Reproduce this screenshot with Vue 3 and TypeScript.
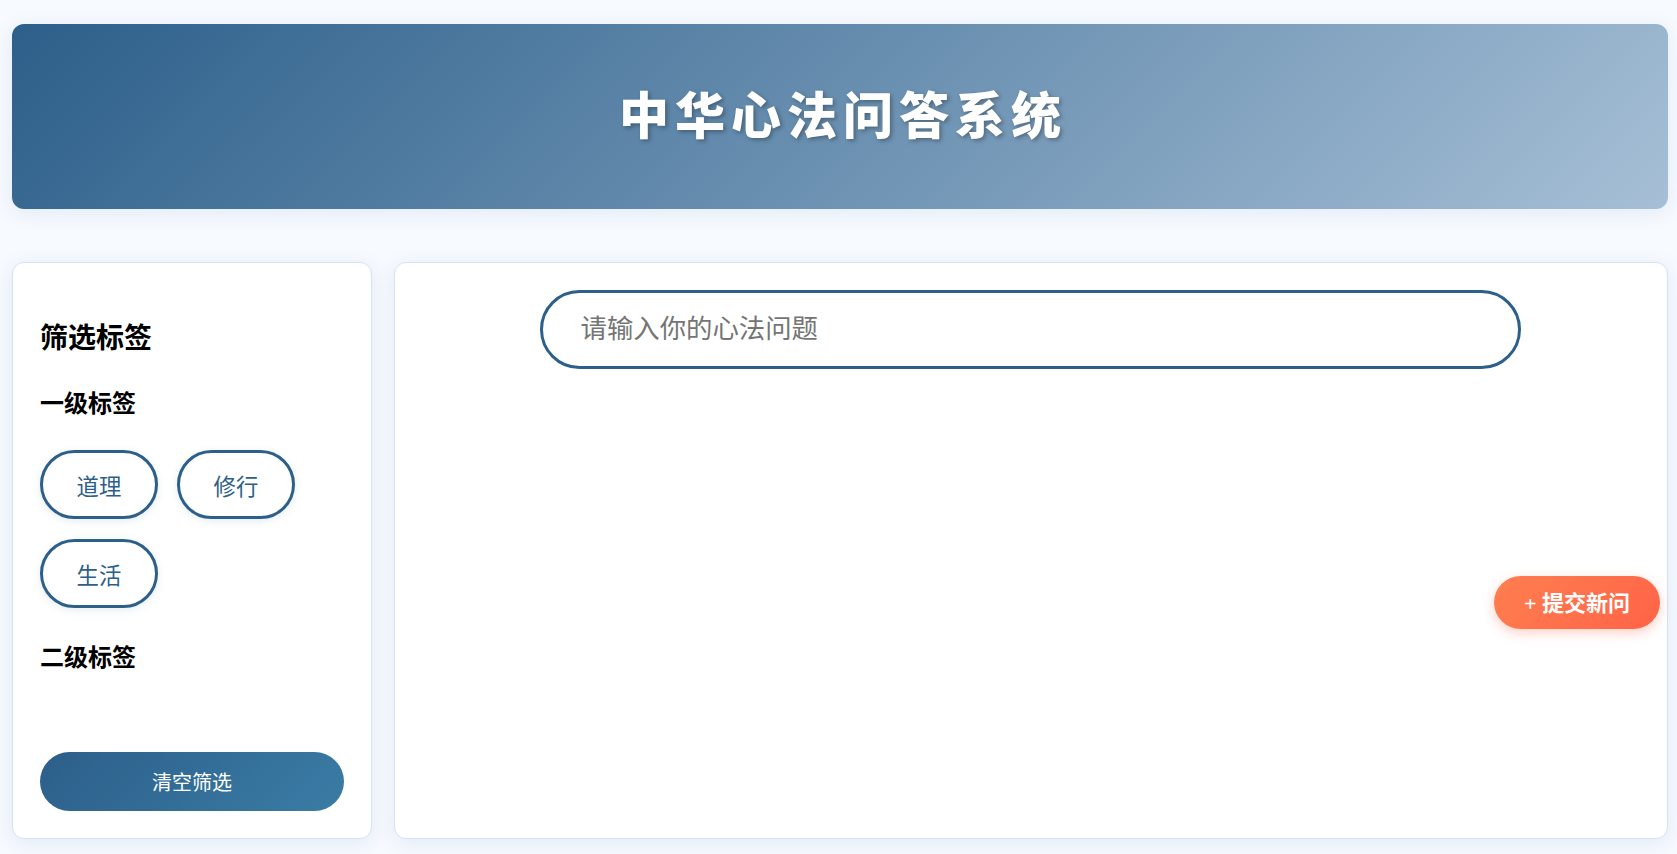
<script setup lang="ts">
const primaryTags: string[] = ['道理', '修行', '生活']
</script>

<template>
  <div class="page">
    <header class="banner">
      <h1 class="title">中华心法问答系统</h1>
    </header>
    <div class="content">
      <aside class="sidebar">
        <h2 class="side-title">筛选标签</h2>
        <h3 class="group-title first">一级标签</h3>
        <div class="tags">
          <button v-for="t in primaryTags" :key="t" class="tag">{{ t }}</button>
        </div>
        <h3 class="group-title second">二级标签</h3>
        <button class="clear">清空筛选</button>
      </aside>
      <main class="main">
        <input class="search" type="text" placeholder="请输入你的心法问题" />
      </main>
    </div>
    <button class="submit">+ 提交新问</button>
  </div>
</template>

<style>
html, body { margin: 0; background: #f7faff; }
</style>

<style scoped>
.page {
  box-sizing: border-box;
  height: 854px;
  padding: 24px 9px 15px 12px;
  display: flex;
  flex-direction: column;
  background: #f7faff;
  font-family: "Liberation Serif", "Noto Sans CJK SC", serif;
  position: relative;
  overflow: hidden;
}
.banner {
  height: 185px;
  flex: none;
  padding-bottom: 10px;
  box-sizing: border-box;
  border-radius: 12px;
  background: linear-gradient(135deg, #2c5f8a, #a6bfd6);
  box-shadow: 0 4px 20px rgba(44, 95, 138, 0.1);
  display: flex;
  align-items: center;
  justify-content: center;
}
.title {
  margin: 0;
  padding-left: 6px;
  color: #fff;
  font-family: "Noto Sans CJK SC", sans-serif;
  font-size: 50px;
  font-weight: 900;
  letter-spacing: 6px;
  text-shadow: 2px 2px 4px rgba(0, 0, 0, 0.3);
}
.content {
  flex: 1;
  min-height: 0;
  margin-top: 53px;
  display: flex;
  gap: 22px;
}
.sidebar {
  box-sizing: border-box;
  width: 360px;
  flex: none;
  padding: 27px;
  background: #fff;
  border: 1px solid #d4e3f8;
  border-radius: 12px;
  box-shadow: 0 4px 20px rgba(44, 95, 138, 0.1);
  display: flex;
  flex-direction: column;
}
.side-title {
  margin: 33px 0 0;
  font-size: 28px;
  line-height: 32px;
  font-weight: 700;
  color: #000;
}
.group-title {
  margin: 0;
  font-size: 24px;
  line-height: 28px;
  font-weight: 700;
  color: #000;
}
.first { margin-top: 35px; }
.second { margin-top: 36px; }
.tags {
  margin-top: 32px;
  display: flex;
  flex-wrap: wrap;
  gap: 20px 19px;
}
.tag {
  box-sizing: border-box;
  width: 118px;
  height: 69px;
  padding: 0;
  background: #fff;
  border: 3px solid #2c5f8a;
  border-radius: 35px;
  color: #2c5f8a;
  font-family: inherit;
  font-size: 22.4px;
  box-shadow: 0 2px 8px rgba(44, 95, 138, 0.12);
}
.clear {
  margin-top: auto;
  height: 59px;
  border: none;
  border-radius: 30px;
  background: linear-gradient(135deg, #2c5f8a, #3a7ca5);
  color: #fff;
  font-family: "Noto Sans CJK SC", sans-serif;
  font-size: 20px;
}
.main {
  flex: 1;
  min-width: 0;
  box-sizing: border-box;
  padding-top: 27px;
  background: #fff;
  border: 1px solid #d4e3f8;
  border-radius: 12px;
  box-shadow: 0 4px 20px rgba(44, 95, 138, 0.1);
  display: flex;
  justify-content: center;
  align-items: flex-start;
}
.search {
  box-sizing: border-box;
  width: 981px;
  height: 79px;
  margin-right: 2px;
  padding: 0 38px 6px;
  background: #fff;
  border: 3px solid #2c5f8a;
  border-radius: 40px;
  outline: none;
  font-family: "Noto Sans CJK SC", sans-serif;
  font-size: 26.4px;
  color: #333;
}
.search::placeholder { color: #757575; }
.submit {
  position: absolute;
  left: 1494px;
  top: 576px;
  width: 166px;
  height: 53px;
  padding: 0 0 4px;
  border: none;
  border-radius: 27px;
  background: linear-gradient(135deg, #ff7f50, #ff6347);
  box-shadow: 0 4px 12px rgba(255, 99, 71, 0.3);
  color: #fff;
  font-family: inherit;
  font-size: 22px;
  font-weight: 700;
}
</style>
